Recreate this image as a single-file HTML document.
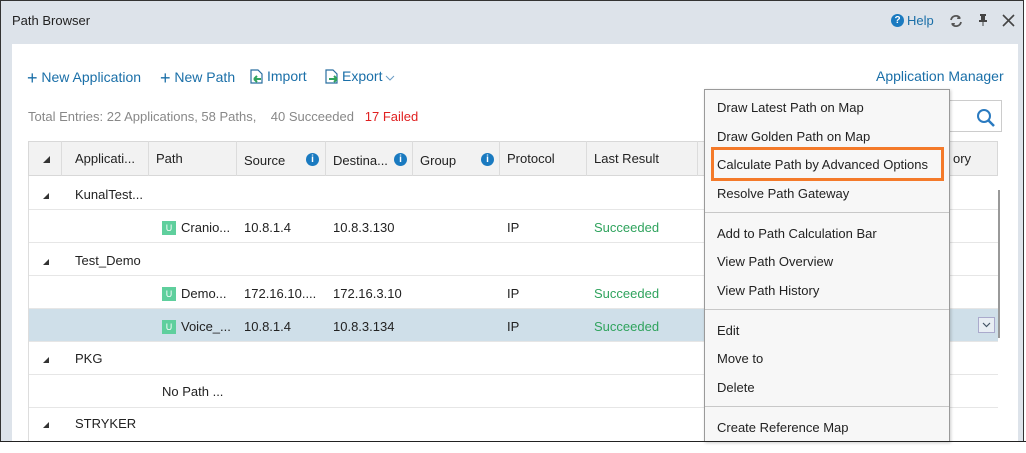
<!DOCTYPE html>
<html><head><style>
*{box-sizing:border-box;margin:0;padding:0}
body{width:1026px;height:453px;overflow:hidden;background:#fff;font-family:"Liberation Sans",sans-serif;font-size:13px;color:#222;position:relative}
.abs{position:absolute;white-space:nowrap}
.frame{position:absolute;left:0;top:0;width:1024px;height:442px;border:1px solid #333;border-bottom:none;background:#dde3ea}
.panel{position:absolute;left:12px;top:44px;width:1006px;height:398px;background:#fff}
.blue{color:#1a6fa8}
.row{position:absolute;left:28px;width:970px;border-bottom:1px solid #e6e6e6}
.hd{position:absolute;left:28px;top:141px;width:970px;height:35px;background:#f2f2f2;border:1px solid #d8d8d8}
.vl{position:absolute;top:141px;height:35px;border-left:1px solid #dcdcdc}
.tri{position:absolute;width:0;height:0;border-left:7px solid transparent;border-bottom:7px solid #333}
.info{position:absolute;width:13px;height:13px;border-radius:50%;background:#1a7ac0;color:#fff;font-size:10px;font-weight:bold;text-align:center;line-height:13px}
.u{display:inline-block;width:14px;height:14px;background:#5fcf9d;color:#fff;font-size:9px;text-align:center;line-height:14px;vertical-align:1px;margin-right:5px}
.ok{color:#2fa35d}
.menu{position:absolute;left:704px;top:89px;width:246px;height:353px;background:#f7f7f7;border:1px solid #9a9a9a;box-shadow:1px 1px 3px rgba(0,0,0,.2)}
.mi{position:absolute;left:12px;font-size:13px;color:#222}
.sep{position:absolute;left:0;width:244px;border-top:1px solid #c8c8c8}
</style></head><body>
<div class="frame"></div>
<div class="abs" style="left:12px;top:13px;font-size:13px">Path Browser</div>
<div class="abs" style="left:891px;top:14px;width:13px;height:13px;border-radius:50%;background:#1a7ac0;color:#fff;font-size:10px;font-weight:bold;text-align:center;line-height:13px">?</div>
<div class="abs blue" style="left:907px;top:13px">Help</div>
<svg class="abs" style="left:949px;top:14px" width="14" height="14"><path d="M2 6 A5 5 0 0 1 11 4 M12 8 A5 5 0 0 1 3 10" fill="none" stroke="#555" stroke-width="1.8"/><path d="M9 2 L12 5 L8 5Z M5 12 L2 9 L6 9Z" fill="#555"/></svg>
<svg class="abs" style="left:978px;top:13px" width="10" height="14"><rect x="2" y="1" width="6" height="2" fill="#444"/><rect x="3" y="3" width="4" height="5" fill="#444"/><rect x="1" y="7" width="8" height="2" fill="#444"/><rect x="4.5" y="9" width="1" height="4" fill="#444"/></svg>
<svg class="abs" style="left:1002px;top:14px" width="13" height="13"><path d="M1 1 L12 12 M12 1 L1 12" stroke="#444" stroke-width="1.6"/></svg>
<div class="panel"></div>
<div class="abs blue" style="left:27px;top:68px;font-size:14px"><span style="font-size:18px;vertical-align:-2px">+</span> New Application</div>
<div class="abs blue" style="left:160px;top:68px;font-size:14px"><span style="font-size:18px;vertical-align:-2px">+</span> New Path</div>
<svg class="abs" style="left:250px;top:69px" width="14" height="16"><path d="M1 1 H8 L12 5 V14 H1 Z" fill="none" stroke="#2a6fa0" stroke-width="1.2"/><path d="M4 10 H11 M4 10 L7 7 M4 10 L7 13" stroke="#2fa35d" stroke-width="2" fill="none"/></svg>
<div class="abs blue" style="left:267px;top:68px;font-size:14px">Import</div>
<svg class="abs" style="left:325px;top:69px" width="14" height="16"><path d="M1 1 H8 L12 5 V14 H1 Z" fill="none" stroke="#2a6fa0" stroke-width="1.2"/><path d="M4 10 H12 M12 10 L9 7 M12 10 L9 13" stroke="#2fa35d" stroke-width="2" fill="none"/></svg>
<div class="abs blue" style="left:342px;top:68px;font-size:14px">Export</div>
<svg class="abs" style="left:385px;top:75px" width="10" height="6"><path d="M1 1 L5 5 L9 1" fill="none" stroke="#6a9cc4" stroke-width="1"/></svg>
<div class="abs blue" style="left:876px;top:68px;font-size:14px">Application Manager</div>
<div class="abs" style="left:28px;top:109px;color:#888">Total Entries: 22 Applications, 58 Paths, &nbsp;&nbsp; 40 Succeeded &nbsp;&nbsp;<span style="color:#e02020">17 Failed</span></div>
<div class="abs" style="left:940px;top:100px;width:62px;height:32px;border:1px solid #ccc;background:#fff"></div>
<svg class="abs" style="left:976px;top:108px" width="20" height="20"><circle cx="8" cy="8" r="6" fill="none" stroke="#2a7ac0" stroke-width="2"/><line x1="12" y1="12" x2="18" y2="18" stroke="#2a7ac0" stroke-width="2.5"/></svg>
<div class="hd"></div>
<div class="vl" style="left:61px"></div><div class="vl" style="left:148px"></div><div class="vl" style="left:236px"></div><div class="vl" style="left:325px"></div><div class="vl" style="left:412px"></div><div class="vl" style="left:499px"></div><div class="vl" style="left:586px"></div><div class="vl" style="left:697px"></div>
<div class="tri" style="left:43px;top:156px"></div>
<div class="abs" style="left:75px;top:151px">Applicati...</div>
<div class="abs" style="left:156px;top:151px">Path</div>
<div class="abs" style="left:244px;top:153px">Source</div><div class="info" style="left:306px;top:153px">i</div>
<div class="abs" style="left:333px;top:153px">Destina...</div><div class="info" style="left:394px;top:153px">i</div>
<div class="abs" style="left:420px;top:153px">Group</div><div class="info" style="left:481px;top:153px">i</div>
<div class="abs" style="left:507px;top:151px">Protocol</div>
<div class="abs" style="left:594px;top:151px">Last Result</div>
<div class="abs" style="left:953px;top:151px">ory</div>
<div class="row" style="top:176px;height:34px"></div>
<div class="row" style="top:210px;height:33px"></div>
<div class="row" style="top:243px;height:33px"></div>
<div class="row" style="top:276px;height:33px"></div>
<div class="row" style="top:309px;height:33px;background:#cfdfe9"></div>
<div class="row" style="top:342px;height:33px"></div>
<div class="row" style="top:375px;height:33px"></div>
<div class="abs" style="left:28px;top:176px;height:266px;border-left:1px solid #ddd"></div>
<div class="tri" style="left:43px;top:193px;border-left-width:6px;border-bottom-width:6px"></div><div class="abs" style="left:75px;top:187px">KunalTest...</div>
<div class="abs" style="left:162px;top:220px"><span class="u">U</span>Cranio...</div><div class="abs" style="left:244px;top:220px">10.8.1.4</div><div class="abs" style="left:333px;top:220px">10.8.3.130</div><div class="abs" style="left:507px;top:220px">IP</div><div class="abs ok" style="left:594px;top:220px">Succeeded</div>
<div class="tri" style="left:43px;top:259px;border-left-width:6px;border-bottom-width:6px"></div><div class="abs" style="left:75px;top:253px">Test_Demo</div>
<div class="abs" style="left:162px;top:286px"><span class="u">U</span>Demo...</div><div class="abs" style="left:244px;top:286px">172.16.10....</div><div class="abs" style="left:333px;top:286px">172.16.3.10</div><div class="abs" style="left:507px;top:286px">IP</div><div class="abs ok" style="left:594px;top:286px">Succeeded</div>
<div class="abs" style="left:162px;top:319px"><span class="u">U</span>Voice_...</div><div class="abs" style="left:244px;top:319px">10.8.1.4</div><div class="abs" style="left:333px;top:319px">10.8.3.134</div><div class="abs" style="left:507px;top:319px">IP</div><div class="abs ok" style="left:594px;top:319px">Succeeded</div>
<div class="tri" style="left:43px;top:357px;border-left-width:6px;border-bottom-width:6px"></div><div class="abs" style="left:75px;top:351px">PKG</div>
<div class="abs" style="left:162px;top:384px">No Path ...</div>
<div class="tri" style="left:43px;top:422px;border-left-width:6px;border-bottom-width:6px"></div><div class="abs" style="left:75px;top:416px">STRYKER</div>
<div class="abs" style="left:978px;top:317px;width:17px;height:16px;border:1px solid #aac;background:#e8eef4"></div>
<svg class="abs" style="left:982px;top:322px" width="9" height="6"><path d="M1 1 L4.5 4.5 L8 1" fill="none" stroke="#456" stroke-width="1.2"/></svg>
<div class="abs" style="left:998px;top:190px;width:2px;height:148px;background:#999"></div>
<div class="menu">
<div class="mi" style="top:10px">Draw Latest Path on Map</div>
<div class="mi" style="top:39px">Draw Golden Path on Map</div>
<div class="abs" style="left:6px;top:57px;width:233px;height:34px;border:3px solid #f47a2a"></div>
<div class="mi" style="top:67px">Calculate Path by Advanced Options</div>
<div class="mi" style="top:96px">Resolve Path Gateway</div>
<div class="sep" style="top:122px"></div>
<div class="mi" style="top:136px">Add to Path Calculation Bar</div>
<div class="mi" style="top:164px">View Path Overview</div>
<div class="mi" style="top:193px">View Path History</div>
<div class="sep" style="top:219px"></div>
<div class="mi" style="top:233px">Edit</div>
<div class="mi" style="top:261px">Move to</div>
<div class="mi" style="top:290px">Delete</div>
<div class="sep" style="top:316px"></div>
<div class="mi" style="top:330px">Create Reference Map</div>
</div>
<div class="abs" style="left:0;top:441px;width:1026px;border-top:1.5px solid #222"></div>
</body></html>
